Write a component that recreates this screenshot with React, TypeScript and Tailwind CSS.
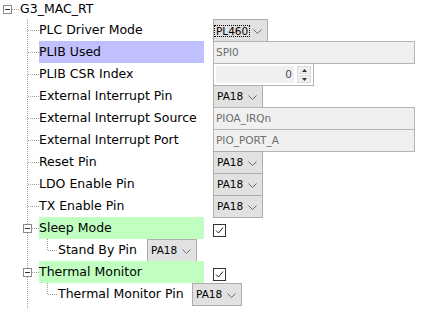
import React from "react"

type Widget =
  | { kind: "combo"; value: string; width: number; focus?: boolean }
  | { kind: "text"; value: string }
  | { kind: "spin"; value: string }
  | { kind: "check" }

type Row = {
  label: string
  type: "leaf" | "branch" | "child"
  highlight?: "blue" | "green"
  labelWidth?: number
  widget: Widget
}

const rows: Row[] = [
  { label: "PLC Driver Mode", type: "leaf", widget: { kind: "combo", value: "PL460", width: 55, focus: true } },
  { label: "PLIB Used", type: "leaf", highlight: "blue", widget: { kind: "text", value: "SPI0" } },
  { label: "PLIB CSR Index", type: "leaf", widget: { kind: "spin", value: "0" } },
  { label: "External Interrupt Pin", type: "leaf", widget: { kind: "combo", value: "PA18", width: 50 } },
  { label: "External Interrupt Source", type: "leaf", widget: { kind: "text", value: "PIOA_IRQn" } },
  { label: "External Interrupt Port", type: "leaf", widget: { kind: "text", value: "PIO_PORT_A" } },
  { label: "Reset Pin", type: "leaf", widget: { kind: "combo", value: "PA18", width: 50 } },
  { label: "LDO Enable Pin", type: "leaf", widget: { kind: "combo", value: "PA18", width: 50 } },
  { label: "TX Enable Pin", type: "leaf", widget: { kind: "combo", value: "PA18", width: 50 } },
  { label: "Sleep Mode", type: "branch", highlight: "green", widget: { kind: "check" } },
  { label: "Stand By Pin", type: "child", labelWidth: 89, widget: { kind: "combo", value: "PA18", width: 50 } },
  { label: "Thermal Monitor", type: "branch", highlight: "green", widget: { kind: "check" } },
  { label: "Thermal Monitor Pin", type: "child", labelWidth: 134, widget: { kind: "combo", value: "PA18", width: 50 } },
]

const DOT = "#a0a0a0"

function Gutter({ type }: { type: Row["type"] | "filler" }) {
  const w = type === "child" ? 58 : 39
  return (
    <svg width={w} height={22} className="shrink-0" shapeRendering="crispEdges">
      <line x1={27.5} y1={0} x2={27.5} y2={22} stroke={DOT} strokeDasharray="1 1" />
      {type === "leaf" && <line x1={28} y1={11.5} x2={39} y2={11.5} stroke={DOT} strokeDasharray="1 1" />}
      {type === "branch" && (
        <>
          <line x1={32} y1={11.5} x2={39} y2={11.5} stroke={DOT} strokeDasharray="1 1" />
          <rect x={23.5} y={7.5} width={8} height={8} fill="#fff" stroke="#8a8a8a" />
          <line x1={25} y1={11.5} x2={30} y2={11.5} stroke="#333" />
        </>
      )}
      {type === "child" && (
        <>
          <line x1={47.5} y1={0} x2={47.5} y2={12} stroke={DOT} strokeDasharray="1 1" />
          <line x1={48} y1={11.5} x2={58} y2={11.5} stroke={DOT} strokeDasharray="1 1" />
        </>
      )}
    </svg>
  )
}

function Chevron() {
  return (
    <svg width={9} height={6} className="shrink-0 mt-[2px]">
      <polyline points="0.5,0.5 4.5,4.5 8.5,0.5" fill="none" stroke="#6a6a6a" strokeWidth={1} />
    </svg>
  )
}

function WidgetView({ widget }: { widget: Widget }) {
  if (widget.kind === "combo") {
    return (
      <div
        className="self-start h-[23px] border border-[#adadad] bg-[#e1e1e1] flex items-center justify-between pl-[1px] pr-[5px] text-[10.5px] text-black"
        style={{ width: widget.width }}
      >
        <span className={widget.focus ? "outline outline-1 outline-dotted outline-black px-[1px] leading-[10px]" : "pl-[2px]"}>
          {widget.value}
        </span>
        <Chevron />
      </div>
    )
  }
  if (widget.kind === "text") {
    return (
      <div className="self-start h-[23px] w-[202px] border border-[#b5b5b5] bg-[#f0f0f0] flex items-center pl-[2px] text-[10.5px] text-[#6d6d6d]">
        {widget.value}
      </div>
    )
  }
  if (widget.kind === "spin") {
    return (
      <div className="self-start h-[23px] w-[101px] border border-[#b5b5b5] bg-white flex items-center p-[2px] gap-[3px]">
        <div className="flex-1 h-full bg-[#f0f0f0] flex items-center justify-end pr-[2px] text-[10.5px] text-[#4a4a6a]">
          {widget.value}
        </div>
        <div className="w-[14px] h-full flex flex-col gap-[1px]">
          <div className="flex-1 bg-[#f0f0f0] border border-[#dadada] flex items-center justify-center">
            <svg width={5} height={3}>
              <polygon points="2.5,0 5,3 0,3" fill="#333" />
            </svg>
          </div>
          <div className="flex-1 bg-[#f0f0f0] border border-[#dadada] flex items-center justify-center">
            <svg width={5} height={3}>
              <polygon points="0,0 5,0 2.5,3" fill="#333" />
            </svg>
          </div>
        </div>
      </div>
    )
  }
  return (
    <div className="self-start mt-[7px] w-[13px] h-[13px] border border-[#333] bg-white flex items-center justify-center">
      <svg width={11} height={11}>
        <polyline points="2,5.5 4.5,8 9,2.5" fill="none" stroke="#222" strokeWidth={1} />
      </svg>
    </div>
  )
}

function TreeRow({ row }: { row: Row }) {
  const bg = row.highlight === "blue" ? "bg-[#c0c0ff]" : row.highlight === "green" ? "bg-[#c0ffc0]" : ""
  return (
    <div className="flex h-[22px] items-stretch">
      <Gutter type={row.type} />
      {row.type === "child" ? (
        <div className="h-full flex items-center whitespace-nowrap" style={{ width: row.labelWidth }}>
          {row.label}
        </div>
      ) : (
        <div className={`w-[165px] h-full flex items-center whitespace-nowrap ${bg}`}>{row.label}</div>
      )}
      <div className={row.type === "child" ? "flex" : "flex ml-[9px]"}>
        <WidgetView widget={row.widget} />
      </div>
    </div>
  )
}

export default function App() {
  return (
    <div className="w-[429px] h-[309px] overflow-hidden bg-white text-black font-['DejaVu_Sans',sans-serif] text-[12.5px]">
      <div className="flex h-[19px] items-center">
        <svg width={20} height={19} className="shrink-0" shapeRendering="crispEdges">
          <line x1={12} y1={9.5} x2={20} y2={9.5} stroke={DOT} strokeDasharray="1 1" />
          <rect x={3.5} y={5.5} width={8} height={8} fill="#fff" stroke="#8a8a8a" />
          <line x1={5} y1={9.5} x2={10} y2={9.5} stroke="#333" />
        </svg>
        <span>G3_MAC_RT</span>
      </div>
      {rows.map((row) => (
        <TreeRow key={row.label} row={row} />
      ))}
      <div className="flex h-[22px]">
        <Gutter type="filler" />
      </div>
    </div>
  )
}
